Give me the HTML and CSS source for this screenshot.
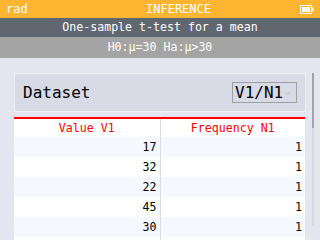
FILE: index.html
```html
<!DOCTYPE html>
<html lang="en">
<head>
    <meta charset="UTF-8">
    <title>Inference</title>
    <link rel="stylesheet" href="styles.css">
</head>
<body>
    <div class="status-bar">
        <span class="angle">rad</span>
        <span class="app-title">INFERENCE</span>
        <svg class="battery" width="14" height="9" viewBox="0 0 14 9">
            <rect x="0.5" y="0.5" width="11" height="8" fill="none" stroke="#fff"/>
            <rect x="2" y="2" width="8" height="5" fill="#fff"/>
            <rect x="12" y="2.5" width="1.5" height="4" fill="#fff"/>
        </svg>
    </div>
    <div class="test-title">One-sample t-test for a mean</div>
    <div class="hypothesis">H0:μ=30 Ha:μ&gt;30</div>

    <div class="main">
        <div class="content">
            <div class="dataset-panel">
                <span class="dataset-label">Dataset</span>
                <div class="dropdown">
                    <span>V1/N1</span>
                    <svg class="chevron" width="5" height="3" viewBox="0 0 5 3">
                        <path d="M0 0 L2.5 2.5 L5 0" fill="none" stroke="#b8b8c0" stroke-width="0.8"/>
                    </svg>
                </div>
            </div>
            <table class="data-table">
                <thead>
                    <tr><th>Value V1</th><th>Frequency N1</th></tr>
                </thead>
                <tbody>
                    <tr><td>17</td><td>1</td></tr>
                    <tr><td>32</td><td>1</td></tr>
                    <tr><td>22</td><td>1</td></tr>
                    <tr><td>45</td><td>1</td></tr>
                    <tr><td>30</td><td>1</td></tr>
                    <tr><td></td><td></td></tr>
                </tbody>
            </table>
        </div>
        <div class="scrollbar"><div class="thumb"></div></div>
    </div>
</body>
</html>
```

FILE: styles.css
```css
* {
    box-sizing: border-box;
}

body {
    margin: 0;
    width: 320px;
    height: 240px;
    overflow: hidden;
    background: #e4e5ef;
    font-family: "DejaVu Sans Mono", "Liberation Mono", monospace;
    font-size: 11.6px;
}

.status-bar {
    height: 18px;
    background: #ffb531;
    color: #fff;
    display: flex;
    align-items: center;
    padding: 0 6px;
    font-size: 12px;
}

.angle {
    width: 60px;
}

.app-title {
    flex: 1;
    text-align: center;
    padding-right: 9px;
}

.battery {
    display: block;
    margin-left: auto;
}

.test-title {
    height: 19px;
    line-height: 19px;
    background: #616771;
    color: #fff;
    text-align: center;
}

.hypothesis {
    height: 21px;
    line-height: 21px;
    background: #a4a4a4;
    color: #fff;
    text-align: center;
}

.main {
    display: flex;
    padding-top: 15px;
}

.content {
    width: 292px;
    margin-left: 14px;
}

.dataset-panel {
    height: 39px;
    background: #d8dae6;
    border: 1px solid #eef0f6;
    display: flex;
    align-items: center;
    justify-content: space-between;
    padding: 0 8px;
    font-size: 16px;
    color: #000;
}

.dropdown {
    width: 65px;
    height: 21px;
    border: 1px solid #a0a0a0;
    display: flex;
    align-items: center;
    padding-left: 2px;
    gap: 2px;
}

.chevron {
    display: block;
    margin-top: 2px;
}

.data-table {
    margin-top: 5px;
    width: 291px;
    border-collapse: collapse;
    table-layout: fixed;
}

.data-table th {
    height: 19px;
    border-top: 2px solid #ff0000;
    background: #fff;
    color: #ff0000;
    font-weight: normal;
    text-align: center;
    padding: 0;
}

.data-table td {
    height: 20px;
    text-align: right;
    padding: 0 3px 0 0;
    color: #000;
}

.data-table th:first-child,
.data-table td:first-child {
    border-right: 1px solid #dcdce0;
    width: 146px;
}

.data-table tbody tr:nth-child(odd) {
    background: #f5f8fe;
}

.data-table tbody tr:nth-child(even) {
    background: #fff;
}

.scrollbar {
    width: 2px;
    height: 153px;
    margin-left: 6px;
    background: #d8d9e0;
}

.thumb {
    height: 55px;
    background: #a3a4ab;
}
```
